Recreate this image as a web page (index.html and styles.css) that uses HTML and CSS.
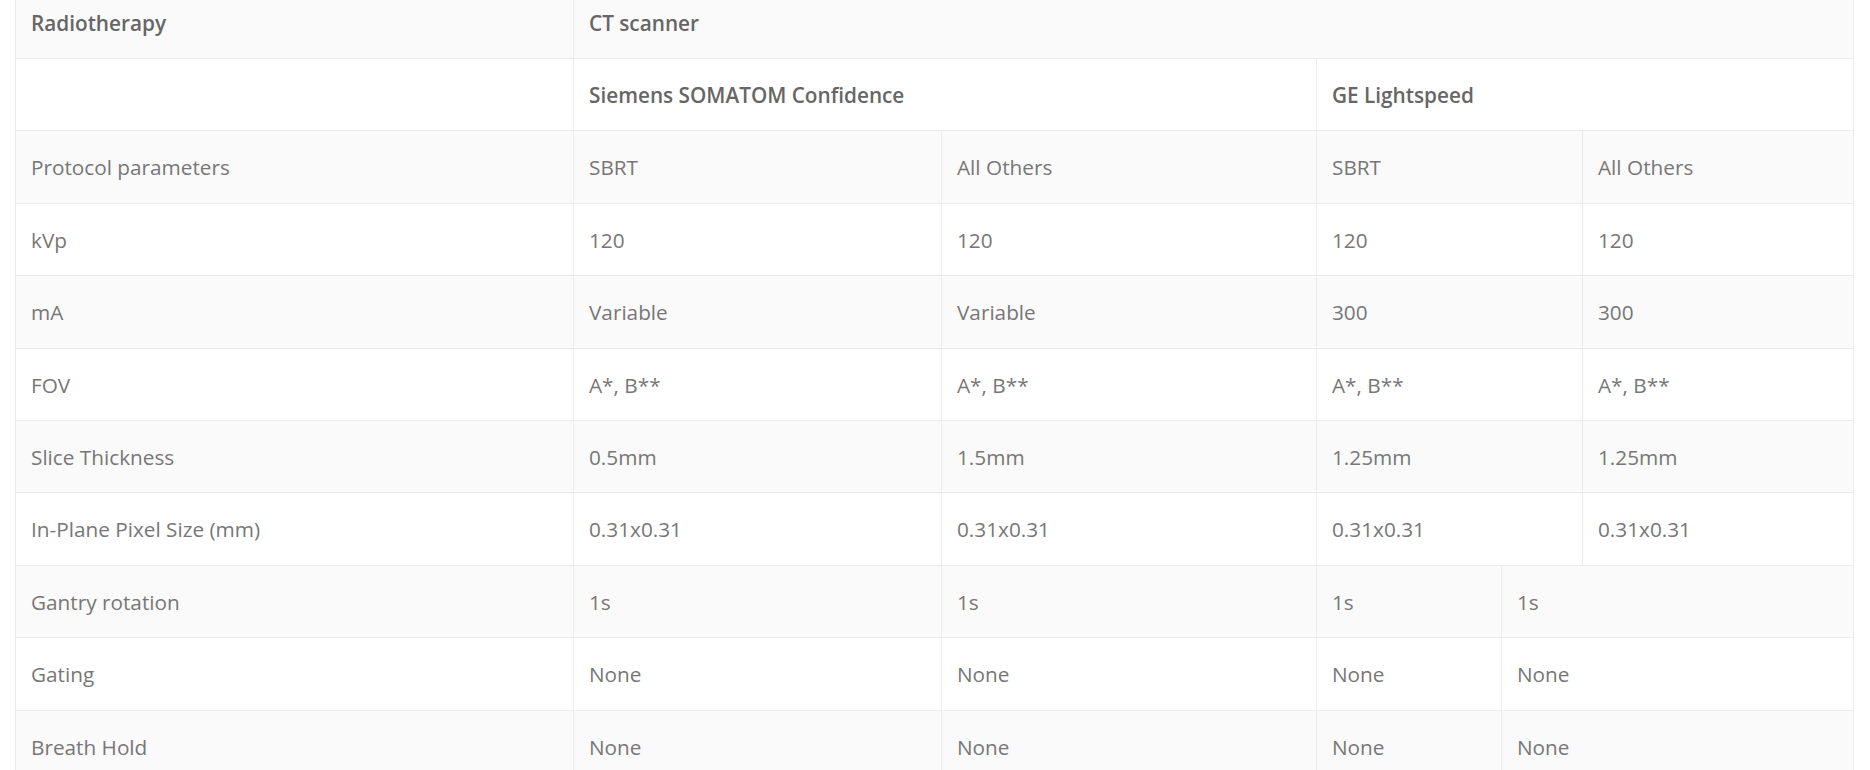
FILE: index.html
```html
<!DOCTYPE html>
<html lang="en">
<head>
<meta charset="utf-8">
<title>CT protocol parameters</title>
<link rel="stylesheet" href="styles.css">
</head>
<body>
<div class="page">
  <table class="spec">
    <colgroup>
      <col class="c1"><col class="c2"><col class="c3"><col class="c4"><col class="c5"><col class="c6">
    </colgroup>
    <tbody>
      <tr><th>Radiotherapy</th><th colspan="5">CT scanner</th></tr>
      <tr><th></th><th colspan="2">Siemens SOMATOM Confidence</th><th colspan="3">GE Lightspeed</th></tr>
      <tr><td>Protocol parameters</td><td>SBRT</td><td>All Others</td><td colspan="2">SBRT</td><td>All Others</td></tr>
      <tr><td>kVp</td><td>120</td><td>120</td><td colspan="2">120</td><td>120</td></tr>
      <tr><td>mA</td><td>Variable</td><td>Variable</td><td colspan="2">300</td><td>300</td></tr>
      <tr><td>FOV</td><td>A*, B**</td><td>A*, B**</td><td colspan="2">A*, B**</td><td>A*, B**</td></tr>
      <tr><td>Slice Thickness</td><td>0.5mm</td><td>1.5mm</td><td colspan="2">1.25mm</td><td>1.25mm</td></tr>
      <tr><td>In-Plane Pixel Size (mm)</td><td>0.31x0.31</td><td>0.31x0.31</td><td colspan="2">0.31x0.31</td><td>0.31x0.31</td></tr>
      <tr><td>Gantry rotation</td><td>1s</td><td>1s</td><td>1s</td><td colspan="2">1s</td></tr>
      <tr><td>Gating</td><td>None</td><td>None</td><td>None</td><td colspan="2">None</td></tr>
      <tr><td>Breath Hold</td><td>None</td><td>None</td><td>None</td><td colspan="2">None</td></tr>
    </tbody>
  </table>
</div>
</body>
</html>
```

FILE: styles.css
```css
html, body {
  margin: 0;
  padding: 0;
  background: #ffffff;
}

.page {
  padding: 0 18px 0 15px;
  font-family: "Open Sans", "Liberation Sans", sans-serif;
  color: #777777;
}

.spec {
  table-layout: fixed;
  width: 1838px;
  border-collapse: collapse;
  margin-top: -14.4px;
  font-size: 20.75px;
  line-height: 31.4px;
}

.c1 { width: 558px; }
.c2 { width: 368px; }
.c3 { width: 375px; }
.c4 { width: 185px; }
.c5 { width: 81px; }
.c6 { width: 271px; }

.spec th,
.spec td {
  border: 1px solid #ececec;
  padding: 21px 16px 19px 15px;
  text-align: left;
  vertical-align: top;
  white-space: nowrap;
}

.spec th {
  font-weight: 600;
  color: #666666;
}

.spec td {
  font-weight: 400;
}

.spec tr:nth-child(odd) {
  background: #fafafa;
}
```
